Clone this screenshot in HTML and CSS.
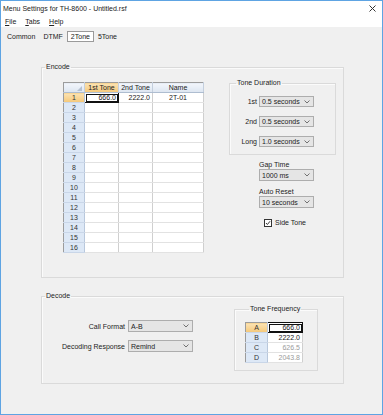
FILE: index.html
```html
<!DOCTYPE html>
<html lang="en">
<head>
    <meta charset="UTF-8">
    <title>Menu Settings for TH-8600 - Untitled.rsf</title>
    <link rel="stylesheet" href="styles.css">
</head>
<body>
    <div class="window">
        <div class="titlebar">
            <span>Menu Settings for TH-8600 - Untitled.rsf</span>
            <svg class="close" viewBox="0 0 7 7"><path d="M0.5 0.5L6.5 6.5M6.5 0.5L0.5 6.5"/></svg>
        </div>
        <div class="menubar">
            <span><u>F</u>ile</span>
            <span><u>T</u>abs</span>
            <span><u>H</u>elp</span>
        </div>
        <div class="tabs">
            <span class="tab">Common</span>
            <span class="tab">DTMF</span>
            <span class="tab active">2Tone</span>
            <span class="tab">5Tone</span>
        </div>

        <div class="page">
            <fieldset class="group encode">
                <legend>Encode</legend>
                <div class="encode-body">
                    <table class="grid">
                        <colgroup>
                            <col class="c-head"><col class="c-tone"><col class="c-tone"><col class="c-name">
                        </colgroup>
                        <thead>
                            <tr>
                                <th class="corner"><span class="tri"></span></th>
                                <th class="hot">1st Tone</th>
                                <th>2nd Tone</th>
                                <th>Name</th>
                            </tr>
                        </thead>
                        <tbody>
                            <tr><th class="hot">1</th><td class="num sel">666.0</td><td class="num">2222.0</td><td class="mid">2T-01</td></tr>
                            <tr><th>2</th><td></td><td></td><td></td></tr>
                            <tr><th>3</th><td></td><td></td><td></td></tr>
                            <tr><th>4</th><td></td><td></td><td></td></tr>
                            <tr><th>5</th><td></td><td></td><td></td></tr>
                            <tr><th>6</th><td></td><td></td><td></td></tr>
                            <tr><th>7</th><td></td><td></td><td></td></tr>
                            <tr><th>8</th><td></td><td></td><td></td></tr>
                            <tr><th>9</th><td></td><td></td><td></td></tr>
                            <tr><th>10</th><td></td><td></td><td></td></tr>
                            <tr><th>11</th><td></td><td></td><td></td></tr>
                            <tr><th>12</th><td></td><td></td><td></td></tr>
                            <tr><th>13</th><td></td><td></td><td></td></tr>
                            <tr><th>14</th><td></td><td></td><td></td></tr>
                            <tr><th>15</th><td></td><td></td><td></td></tr>
                            <tr><th>16</th><td></td><td></td><td></td></tr>
                        </tbody>
                    </table>

                    <div class="side">
                        <fieldset class="group duration">
                            <legend>Tone Duration</legend>
                            <div class="field">
                                <label>1st</label>
                                <div class="combo"><span>0.5 seconds</span><svg viewBox="0 0 6 4"><polyline points="0.5,0.5 3,3 5.5,0.5"/></svg></div>
                            </div>
                            <div class="field">
                                <label>2nd</label>
                                <div class="combo"><span>0.5 seconds</span><svg viewBox="0 0 6 4"><polyline points="0.5,0.5 3,3 5.5,0.5"/></svg></div>
                            </div>
                            <div class="field">
                                <label>Long</label>
                                <div class="combo"><span>1.0 seconds</span><svg viewBox="0 0 6 4"><polyline points="0.5,0.5 3,3 5.5,0.5"/></svg></div>
                            </div>
                        </fieldset>

                        <div class="stack first">
                            <label>Gap Time</label>
                            <div class="combo tall"><span>1000 ms</span><svg viewBox="0 0 6 4"><polyline points="0.5,0.5 3,3 5.5,0.5"/></svg></div>
                        </div>
                        <div class="stack">
                            <label>Auto Reset</label>
                            <div class="combo tall"><span>10 seconds</span><svg viewBox="0 0 6 4"><polyline points="0.5,0.5 3,3 5.5,0.5"/></svg></div>
                        </div>

                        <div class="check">
                            <span class="box"><svg viewBox="0 0 8 8"><polyline points="1.3,4 3.2,6 6.8,1.6"/></svg></span>
                            <span>Side Tone</span>
                        </div>
                    </div>
                </div>
            </fieldset>

            <fieldset class="group decode">
                <legend>Decode</legend>
                <div class="decode-body">
                    <div class="decode-fields">
                        <div class="field wide">
                            <label>Call Format</label>
                            <div class="combo tall"><span>A-B</span><svg viewBox="0 0 6 4"><polyline points="0.5,0.5 3,3 5.5,0.5"/></svg></div>
                        </div>
                        <div class="field wide">
                            <label>Decoding Response</label>
                            <div class="combo tall"><span>Remind</span><svg viewBox="0 0 6 4"><polyline points="0.5,0.5 3,3 5.5,0.5"/></svg></div>
                        </div>
                    </div>

                    <fieldset class="group freq">
                        <legend>Tone Frequency</legend>
                        <table class="grid small">
                            <colgroup><col class="c-letter"><col class="c-freq"></colgroup>
                            <tbody>
                                <tr><th class="hot">A</th><td class="num sel">666.0</td></tr>
                                <tr><th>B</th><td class="num">2222.0</td></tr>
                                <tr><th>C</th><td class="num dim">626.5</td></tr>
                                <tr><th>D</th><td class="num dim">2043.8</td></tr>
                            </tbody>
                        </table>
                    </fieldset>
                </div>
            </fieldset>
        </div>
    </div>
</body>
</html>
```

FILE: styles.css
```css
* {
    box-sizing: border-box;
}
body {
    margin: 0;
    font-family: "Liberation Sans", Arial, sans-serif;
    font-size: 7px;
    line-height: 9px;
    color: #222;
}
.window {
    width: 383px;
    height: 415px;
    border: 1px solid #5ea4e3;
    background: #f0f0f0;
    display: flex;
    flex-direction: column;
}
.titlebar {
    height: 15px;
    background: #fff;
    display: flex;
    align-items: center;
    justify-content: space-between;
    padding: 0 6px 0 2px;
}
.close {
    width: 7px;
    height: 7px;
    stroke: #333;
    stroke-width: 1;
}
.menubar {
    height: 11px;
    background: #fff;
    display: flex;
    align-items: center;
    gap: 9px;
    padding-left: 4px;
}
.menubar u {
    text-decoration-thickness: 1px;
}
.tabs {
    display: flex;
    padding: 4px 0 0 2px;
    height: 18px;
}
.tab {
    height: 11px;
    padding: 0 3px;
    line-height: 10px;
    border: 1px solid transparent;
}
.tab.active {
    background: #fff;
    border-color: #9a9a9a;
}

/* group boxes */
.page {
    padding: 17px 0 0 40px;
}
.group {
    margin: 0;
    padding: 0;
    border: 1px solid #dadada;
    box-shadow: inset 1px 1px 0 #fbfbfb;
    min-width: 0;
}
.group legend {
    margin-left: 3px;
    padding: 0 1px;
    line-height: 10px;
}
.encode {
    width: 303px;
    padding-bottom: 24px;
}
.encode-body {
    display: flex;
    align-items: flex-start;
    padding: 6px 0 0 21px;
}

/* data grid */
.grid {
    border-collapse: collapse;
    table-layout: fixed;
    background: #fff;
    border: 1px solid #9c9c9c;
    margin-top: 4px;
}
.c-head { width: 21px; }
.c-tone { width: 34px; }
.c-name { width: 51px; }
.grid th,
.grid td {
    height: 10px;
    padding: 0 2px;
    font-weight: normal;
    line-height: 9px;
    white-space: nowrap;
    overflow: hidden;
}
.grid td {
    border-right: 1px solid #cfcfcf;
    border-bottom: 1px solid #e2e2e2;
}
.grid thead th {
    height: 9px;
    background: linear-gradient(#f3f6fb, #dce5f1);
    border-right: 1px solid #c4cfdd;
    border-bottom: 1px solid #aebdd0;
    text-align: center;
}
.grid tbody th {
    background: #dde8f6;
    border-right: 1px solid #b9c8dc;
    border-bottom: 1px solid #c9d6e8;
    text-align: center;
    color: #333;
}
.grid th.hot,
.grid thead th.hot {
    background: linear-gradient(#fbe3b4, #f5c878);
}
.grid th.corner {
    position: relative;
}
.tri {
    position: absolute;
    right: 2px;
    bottom: 1px;
    border-left: 5px solid transparent;
    border-bottom: 5px solid #b5c1d1;
}
.num {
    text-align: right;
}
.mid {
    text-align: center;
}
.grid td.sel {
    outline: 1px solid #111;
    outline-offset: -2px;
    border: 1px solid #111;
}
.dim {
    color: #9a9a9a;
}

/* right column of encode */
.side {
    margin-left: 25px;
    width: 107px;
}
.duration {
    width: 107px;
    padding: 8px 0 7px;
}
.duration legend {
    margin-left: 6px;
}
.field {
    display: flex;
    align-items: center;
    gap: 2px;
}
.field + .field {
    margin-top: 9px;
}
.field label {
    width: 27px;
    text-align: right;
}
.combo {
    width: 55px;
    height: 11px;
    border: 1px solid #adadad;
    background: #e5e5e5;
    display: flex;
    align-items: center;
    justify-content: space-between;
    padding: 0 3px 0 2px;
    line-height: 9px;
}
.combo.tall {
    height: 12px;
}
.combo svg {
    width: 6px;
    height: 4px;
    fill: none;
    stroke: #707070;
    stroke-width: 1;
}
.stack {
    margin: 6px 0 0 30px;
    width: 55px;
}
.stack.first {
    margin-top: 5px;
}
.check {
    display: flex;
    align-items: center;
    gap: 3px;
    margin: 10px 0 0 35px;
}
.check .box {
    width: 8px;
    height: 8px;
    border: 1px solid #333;
    background: #fff;
    display: flex;
}
.check svg {
    width: 6px;
    height: 6px;
    fill: none;
    stroke: #222;
    stroke-width: 1.2;
}

/* decode */
.decode {
    width: 303px;
    margin-top: 13px;
    padding-bottom: 12px;
}
.decode-body {
    display: flex;
    align-items: flex-start;
    padding-top: 3px;
}
.decode-fields {
    margin-top: 16px;
    width: 151px;
}
.field.wide + .field.wide {
    margin-top: 8px;
}
.field.wide label {
    width: 84px;
    padding-right: 1px;
}
.field.wide .combo {
    width: 65px;
}
.freq {
    margin-left: 41px;
    width: 84px;
    padding: 8px 0 7px 10px;
}
.freq legend {
    margin-left: 4px;
}
.grid.small {
    margin-top: 0;
}
.c-letter { width: 22px; }
.c-freq { width: 35px; }
```
